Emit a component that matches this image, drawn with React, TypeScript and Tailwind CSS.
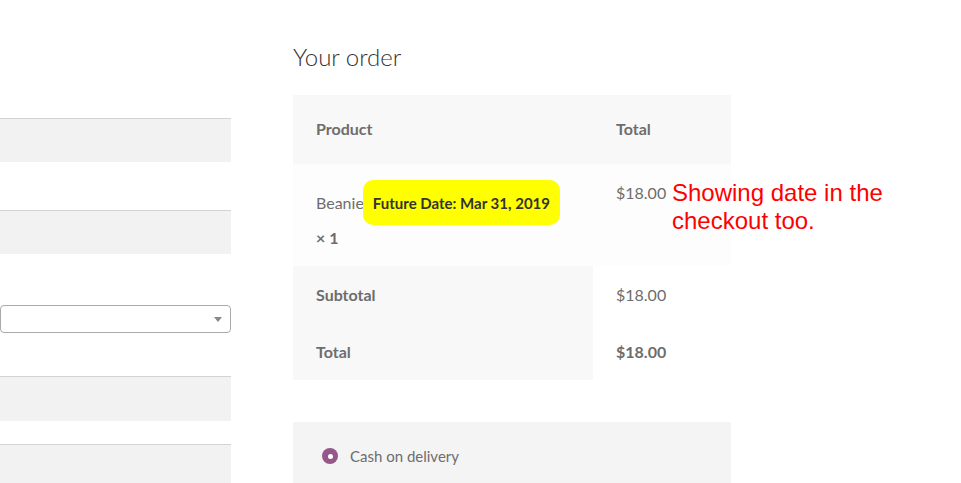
import React from "react";

const Field = ({ className = "" }: { className?: string }) => (
  <div className={`w-full shrink-0 bg-[#f2f2f2] border-t border-[#d3d3d3] ${className}`} />
);

export default function App() {
  return (
    <div
      className="relative w-[961px] h-[483px] overflow-hidden bg-white flex text-[#6d6d6d]"
      style={{ fontFamily: "Lato, 'Noto Sans', sans-serif" }}
    >
      {/* left form column */}
      <div className="w-[231px] shrink-0 flex flex-col">
        <Field className="mt-[118px] h-[44px]" />
        <Field className="mt-[48px] h-[44px]" />
        <div className="shrink-0 mt-[51px] h-[28px] bg-white border border-[#aaaaaa] rounded-[4px] flex items-center justify-end pr-[8px]">
          <div className="w-0 h-0 border-l-[4px] border-r-[4px] border-t-[5px] border-l-transparent border-r-transparent border-t-[#888888]" />
        </div>
        <Field className="mt-[43px] h-[45px]" />
        <Field className="mt-[23px] h-[60px]" />
      </div>

      {/* right order column */}
      <div className="ml-[62px] w-[438px] shrink-0 flex flex-col">
        <h3 className="mt-[42px] text-[24px] leading-[30px] font-light text-[#333333]">Your order</h3>

        <div className="mt-[23px] flex flex-col text-[16px] leading-[24px]">
          {/* header */}
          <div className="h-[69px] bg-[#f8f8f8] grid grid-cols-[300px_138px] items-center font-bold">
            <div className="pl-[23px] -mt-[1px]">Product</div>
            <div className="pl-[23px] -mt-[1px]">Total</div>
          </div>
          {/* item row */}
          <div className="h-[102px] bg-[#fdfdfd] grid grid-cols-[300px_138px]">
            <div className="pl-[23px] pt-[16px] flex flex-col">
              <div className="flex items-center h-[45px]">
                <span>Beanie</span>
                <span className="-ml-[1px] h-[45px] px-[10px] flex items-center bg-[#ffff00] rounded-[10px] text-[15px] font-bold text-[#333333]">
                  Future Date: Mar 31, 2019
                </span>
              </div>
              <div className="mt-[1px] font-bold">× 1</div>
            </div>
            <div className="pl-[23px] pt-[17px]">$18.00</div>
          </div>
          {/* subtotal */}
          <div className="h-[57px] grid grid-cols-[300px_138px]">
            <div className="bg-[#f8f8f8] pl-[23px] flex items-center font-bold">Subtotal</div>
            <div className="pl-[23px] flex items-center">$18.00</div>
          </div>
          {/* total */}
          <div className="h-[57px] grid grid-cols-[300px_138px]">
            <div className="bg-[#f8f8f8] pl-[23px] flex items-center font-bold">Total</div>
            <div className="pl-[23px] flex items-center font-bold">$18.00</div>
          </div>
        </div>

        {/* payment */}
        <div className="mt-[42px] h-[70px] bg-[#f4f4f4] pt-[22px] pl-[29px] flex items-start">
          <div className="flex items-center h-[24px]">
            <div className="w-[16px] h-[16px] rounded-full bg-[#96588a] flex items-center justify-center">
              <div className="w-[5px] h-[5px] rounded-full bg-white" />
            </div>
            <span className="ml-[12px] text-[15px] leading-[24px]">Cash on delivery</span>
          </div>
        </div>
      </div>

      {/* annotation */}
      <div
        className="absolute left-[672px] top-[179px] text-[24px] leading-[28px] text-[#ff0000]"
        style={{ fontFamily: "'Liberation Sans', Arial, sans-serif" }}
      >
        Showing date in the
        <br />
        checkout too.
      </div>
    </div>
  );
}
